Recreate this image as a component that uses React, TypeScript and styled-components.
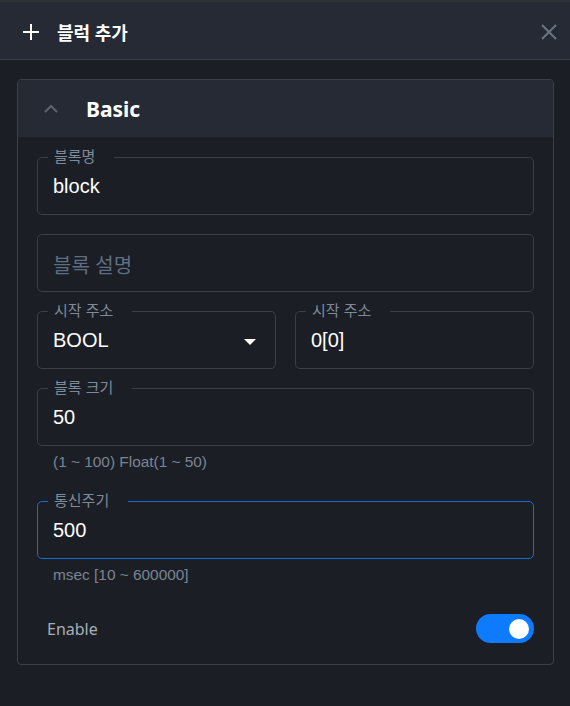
import React from 'react'
import styled, { createGlobalStyle } from 'styled-components'

const colors = {
  page: '#1b1e25',
  bar: '#252a34',
  line: '#3a3f49',
  label: '#7f8a99',
  helper: '#7b8492',
  placeholder: '#5f6e83',
  text: '#ffffff',
  focus: '#1a6acb',
  accent: '#0d7bfc',
}

const GlobalStyle = createGlobalStyle`
  html, body {
    margin: 0;
    padding: 0;
    background: ${colors.page};
  }
  body {
    font-family: 'Liberation Sans', 'Noto Sans CJK KR', sans-serif;
  }
`

interface FieldProps {
  label?: string
  value?: string
  placeholder?: string
  focused?: boolean
  select?: boolean
}

const Field: React.FC<FieldProps> = (props) => {
  return (
    <FieldBox $focused={props.focused}>
      {props.label && <FieldLabel>{props.label}</FieldLabel>}
      {props.value ? <Value>{props.value}</Value> : <Placeholder>{props.placeholder}</Placeholder>}
      {props.select && <Caret />}
    </FieldBox>
  )
}

const App: React.FC = () => {
  const [enabled, setEnabled] = React.useState(true)

  return (
    <>
      <GlobalStyle />
      <Panel>
        <TopBar>
          <TitleGroup>
            <svg width="18" height="18" viewBox="0 0 18 18">
              <path d="M9 1v16M1 9h16" stroke="#fff" strokeWidth="2" fill="none" />
            </svg>
            <Title>블럭 추가</Title>
          </TitleGroup>
          <CloseButton aria-label="close">
            <svg width="18" height="18" viewBox="0 0 18 18">
              <path d="M2 2l14 14M16 2L2 16" stroke="#6b7482" strokeWidth="2" fill="none" />
            </svg>
          </CloseButton>
        </TopBar>
        <Body>
          <Card>
            <CardHeader>
              <svg width="24" height="24" viewBox="0 0 24 24">
                <path d="M6 15l6-6 6 6" stroke="#5c6471" strokeWidth="2" fill="none" />
              </svg>
              <CardTitle>Basic</CardTitle>
            </CardHeader>
            <Form>
              <Field label="블록명" value="block" />
              <Field placeholder="블록 설명" />
              <Row>
                <Field label="시작 주소" value="BOOL" select />
                <Field label="시작 주소" value="0[0]" />
              </Row>
              <Group>
                <Field label="블록 크기" value="50" />
                <Helper>(1 ~ 100) Float(1 ~ 50)</Helper>
              </Group>
              <Group>
                <Field label="통신주기" value="500" focused />
                <Helper>msec [10 ~ 600000]</Helper>
              </Group>
              <SwitchRow>
                <SwitchLabel>Enable</SwitchLabel>
                <Toggle $on={enabled} onClick={() => setEnabled(!enabled)} />
              </SwitchRow>
            </Form>
          </Card>
        </Body>
      </Panel>
    </>
  )
}
export default App

const Panel = styled.div`
  width: 570px;
  height: 706px;
  background: ${colors.page};
  display: flex;
  flex-direction: column;
`

const TopBar = styled.div`
  height: 60px;
  box-sizing: border-box;
  border-top: 2px solid #2d323b;
  border-bottom: 1px solid ${colors.line};
  background: ${colors.bar};
  display: flex;
  align-items: center;
  justify-content: space-between;
  padding: 2px 12px 0 22px;
`

const TitleGroup = styled.div`
  display: flex;
  align-items: center;
  gap: 17px;
  svg {
    display: block;
  }
`

const Title = styled.div`
  font-family: 'Noto Sans', 'Noto Sans CJK KR', sans-serif;
  font-weight: 700;
  font-size: 18px;
  color: ${colors.text};
`

const CloseButton = styled.button`
  border: 0;
  padding: 0;
  background: transparent;
  display: flex;
  cursor: pointer;
`

const Body = styled.div`
  padding: 19px 16px 0 17px;
`

const Card = styled.div`
  border: 1px solid ${colors.line};
  border-radius: 4px;
  overflow: hidden;
`

const CardHeader = styled.div`
  height: 57px;
  background: ${colors.bar};
  display: flex;
  align-items: center;
  gap: 23px;
  padding-left: 21px;
  svg {
    display: block;
  }
`

const CardTitle = styled.div`
  font-family: 'Noto Sans', sans-serif;
  font-weight: 700;
  font-size: 21px;
  color: ${colors.text};
`

const Form = styled.div`
  display: flex;
  flex-direction: column;
  gap: 19px;
  padding: 20px 19px 21px 19px;
`

const Row = styled.div`
  display: grid;
  grid-template-columns: 1fr 1fr;
  gap: 19px;
`

const Group = styled.div`
  display: flex;
  flex-direction: column;
`

const FieldBox = styled.div<{ $focused?: boolean }>`
  position: relative;
  height: 58px;
  box-sizing: border-box;
  border: 1px solid ${(p) => (p.$focused ? colors.focus : colors.line)};
  border-radius: 5px;
  display: flex;
  align-items: center;
  padding: 0 15px;
`

const FieldLabel = styled.span`
  position: absolute;
  top: -11px;
  left: 10px;
  padding: 0 19px 0 6px;
  background: ${colors.page};
  font-size: 15px;
  line-height: 20px;
  color: ${colors.label};
`

const Value = styled.span`
  font-size: 20px;
  color: ${colors.text};
  padding-top: 1px;
`

const Placeholder = styled.span`
  font-size: 20px;
  color: ${colors.placeholder};
  padding-top: 2px;
`

const Caret = styled.span`
  margin-left: auto;
  margin-right: 4px;
  width: 0;
  height: 0;
  border-left: 6px solid transparent;
  border-right: 6px solid transparent;
  border-top: 6px solid ${colors.text};
  margin-top: 3px;
`

const Helper = styled.div`
  font-size: 15.4px;
  line-height: 20px;
  color: ${colors.helper};
  margin: 6px 0 10px 16px;
`

const SwitchRow = styled.div`
  display: flex;
  align-items: center;
  justify-content: space-between;
  padding-left: 10px;
  height: 29px;
`

const SwitchLabel = styled.span`
  font-family: 'Noto Sans', sans-serif;
  font-size: 16px;
  color: #a9aeb6;
`

const Toggle = styled.button<{ $on: boolean }>`
  position: relative;
  width: 58px;
  height: 29px;
  border: 0;
  padding: 0;
  border-radius: 15px;
  background: ${(p) => (p.$on ? colors.accent : '#4a505a')};
  cursor: pointer;
  &::after {
    content: '';
    position: absolute;
    top: 4.5px;
    left: 33px;
    width: 20px;
    height: 20px;
    border-radius: 50%;
    background: #fff;
    transform: translateX(${(p) => (p.$on ? '0' : '-28px')});
  }
`
